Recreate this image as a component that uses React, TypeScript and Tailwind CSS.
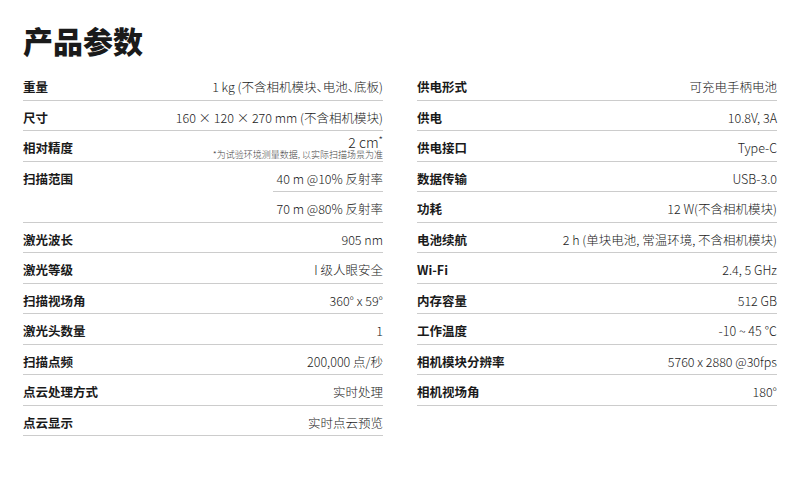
import React from "react";

type Row = { label: string; values: React.ReactNode[] };

const left: Row[] = [
  {
    label: "重量",
    values: [
      <>
        1 kg (不含相机模块<span className="[font-feature-settings:'halt']">、</span>电池
        <span className="[font-feature-settings:'halt']">、</span>底板)
      </>,
    ],
  },
  { label: "尺寸", values: ["160 × 120 × 270 mm (不含相机模块)"] },
  { label: "相对精度", values: ["__note"] },
  { label: "扫描范围", values: ["40 m @10% 反射率", "70 m @80% 反射率"] },
  { label: "激光波长", values: ["905 nm"] },
  { label: "激光等级", values: ["I 级人眼安全"] },
  { label: "扫描视场角", values: ["360° x 59°"] },
  { label: "激光头数量", values: ["1"] },
  { label: "扫描点频", values: ["200,000 点/秒"] },
  { label: "点云处理方式", values: ["实时处理"] },
  { label: "点云显示", values: ["实时点云预览"] },
];

const right: Row[] = [
  { label: "供电形式", values: ["可充电手柄电池"] },
  { label: "供电", values: ["10.8V, 3A"] },
  { label: "供电接口", values: ["Type-C"] },
  { label: "数据传输", values: ["USB-3.0"] },
  { label: "功耗", values: ["12 W(不含相机模块)"] },
  { label: "电池续航", values: ["2 h (单块电池, 常温环境, 不含相机模块)"] },
  { label: "Wi-Fi", values: ["2.4, 5 GHz"] },
  { label: "内存容量", values: ["512 GB"] },
  { label: "工作温度", values: ["-10 ~ 45 ℃"] },
  { label: "相机模块分辨率", values: ["5760 x 2880 @30fps"] },
  { label: "相机视场角", values: ["180°"] },
];

const font = { fontFamily: '"Noto Sans CJK SC", "Noto Sans", sans-serif' };

function Dots({ short }: { short?: boolean }) {
  return (
    <div className={short ? "w-[110px] h-px shrink-0 bg-[#cccccc]" : "w-full h-px shrink-0 bg-[#cccccc]"} />
  );
}

function SpecRow({ row, start }: { row: Row; start: number }) {
  const hClass = (k: number) => (k % 2 === 0 ? "h-[30px]" : "h-[29px]");
  if (row.values[0] === "__note") {
    return (
      <div className="flex flex-col">
        <div className={"flex items-end justify-between pb-[1px] " + hClass(start)}>
          <span className="text-[12.5px] leading-[20px] font-bold text-[#1a1a1a] pb-[2px]">{row.label}</span>
          <div className="flex flex-col items-end">
            <span className="text-[14px] leading-[14px] font-light text-[#222]">
              2 cm<span className="text-[10px] align-top leading-[10px]">*</span>
            </span>
            <span className="text-[9px] leading-[11px] font-light text-[#444] whitespace-nowrap">
              *为试验环境测量数据, 以实际扫描场景为准
            </span>
          </div>
        </div>
        <Dots />
      </div>
    );
  }
  return (
    <div className="flex flex-col">
      <div className="flex items-start justify-between">
        <span className="block text-[12.5px] leading-[20px] font-bold text-[#1a1a1a] pt-[7px]">{row.label}</span>
        <div className="flex flex-col items-end">
          {row.values.map((v, i) => (
            <div key={i} className="flex flex-col items-end">
              <div
                className={
                  "pt-[7px] text-[12.5px] leading-[20px] font-light text-[#222] whitespace-nowrap text-right " +
                  hClass(start + i)
                }
              >
                {v}
              </div>
              {i < row.values.length - 1 && <Dots short />}
            </div>
          ))}
        </div>
      </div>
      <Dots />
    </div>
  );
}

function Column({ rows }: { rows: Row[] }) {
  let idx = 0;
  return (
    <div className="flex flex-col">
      {rows.map((r) => {
        const s = idx;
        idx += r.values.length;
        return <SpecRow key={r.label} row={r} start={s} />;
      })}
    </div>
  );
}

export default function App() {
  return (
    <div className="w-[800px] h-[479px] bg-white px-[23px] pt-[20px]" style={font}>
      <h1 className="text-[30px] leading-[40px] font-black text-[#1a1a1a] mb-[10px]">产品参数</h1>
      <div className="grid grid-cols-2 gap-x-[34px]">
        <Column rows={left} />
        <Column rows={right} />
      </div>
    </div>
  );
}
